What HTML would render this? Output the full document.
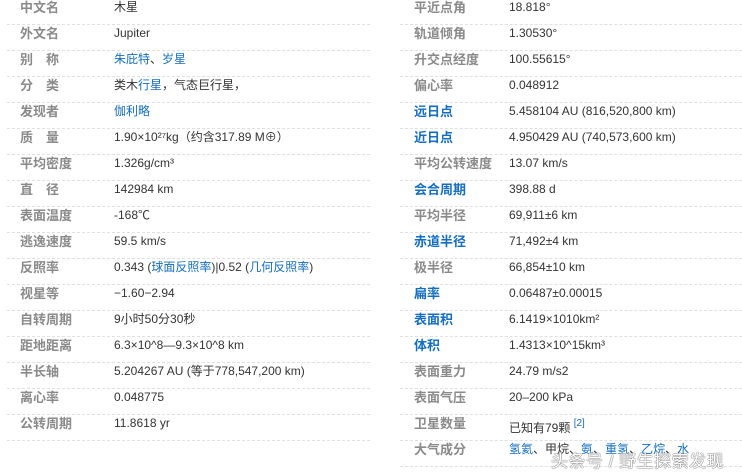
<!DOCTYPE html><html><head><meta charset="utf-8"><style>
body{margin:0;width:742px;height:475px;background:#fff;overflow:hidden;position:relative;font-family:"Liberation Sans","Noto Sans CJK SC",sans-serif;}
.r{position:absolute;height:26px;border-bottom:1px dashed #e0e0e0;box-sizing:border-box;}
.l{position:absolute;top:0;line-height:17px;font-size:13px;font-weight:bold;color:#8a8a8a;}
.v{position:absolute;top:0;line-height:17px;font-size:12px;color:#333;white-space:nowrap;}
.b{color:#136ec2}
a{color:#136ec2;text-decoration:none}
sup{font-size:10px;color:#136ec2;vertical-align:6px}
.wm{position:absolute;left:551px;top:447px;font-size:17px;color:#fff;text-shadow:0 0 1px #444,0 0 1px #444;letter-spacing:0.5px}
</style></head><body>
<script>
var L=[["中文名","木星"],["外文名","Jupiter"],["别　称",'<a>朱庇特</a>、<a>岁星</a>'],["分　类",'类木<a>行星</a>，气态巨行星，'],["发现者",'<a>伽利略</a>'],["质　量","1.90×10²⁷kg（约含317.89 M⊕）"],["平均密度","1.326g/cm³"],["直　径","142984 km"],["表面温度","-168℃"],["逃逸速度","59.5 km/s"],["反照率",'0.343 (<a>球面反照率</a>)|0.52 (<a>几何反照率</a>)'],["视星等","−1.60−2.94"],["自转周期","9小时50分30秒"],["距地距离","6.3×10^8—9.3×10^8 km"],["半长轴","5.204267 AU (等于778,547,200 km)"],["离心率","0.048775"],["公转周期","11.8618 yr"]];
var R=[["平近点角","18.818°"],["轨道倾角","1.30530°"],["升交点经度","100.55615°"],["偏心率","0.048912"],["远日点","5.458104 AU (816,520,800 km)",1],["近日点","4.950429 AU (740,573,600 km)",1],["平均公转速度","13.07 km/s"],["会合周期","398.88 d",1],["平均半径","69,911±6 km"],["赤道半径","71,492±4 km",1],["极半径","66,854±10 km"],["扁率","0.06487±0.00015",1],["表面积","6.1419×1010km²",1],["体积","1.4313×10^15km³",1],["表面重力","24.79 m/s2"],["表面气压","20–200 kPa"],["卫星数量","已知有79颗 <sup>[2]</sup>"],["大气成分",'<a>氢</a><a>氦</a>、甲烷、<a>氨</a>、<a>重氢</a>、<a>乙烷</a>、<a>水</a>']];
var h="";
L.forEach(function(e,i){h+='<div class="r" style="left:7px;width:363px;top:'+(-1+26*i)+'px"><div class="l" style="left:13px">'+e[0]+'</div><div class="v" style="left:107px">'+e[1]+'</div></div>';});
R.forEach(function(e,i){h+='<div class="r" style="left:400px;width:342px;top:'+(-1+26*i)+'px"><div class="l'+(e[2]?' b':'')+'" style="left:14px">'+e[0]+'</div><div class="v" style="left:109px">'+e[1]+'</div></div>';});
document.body.innerHTML+=h;
</script>
<div class="wm">头条号 / 野生探索发现</div>
</body></html>
